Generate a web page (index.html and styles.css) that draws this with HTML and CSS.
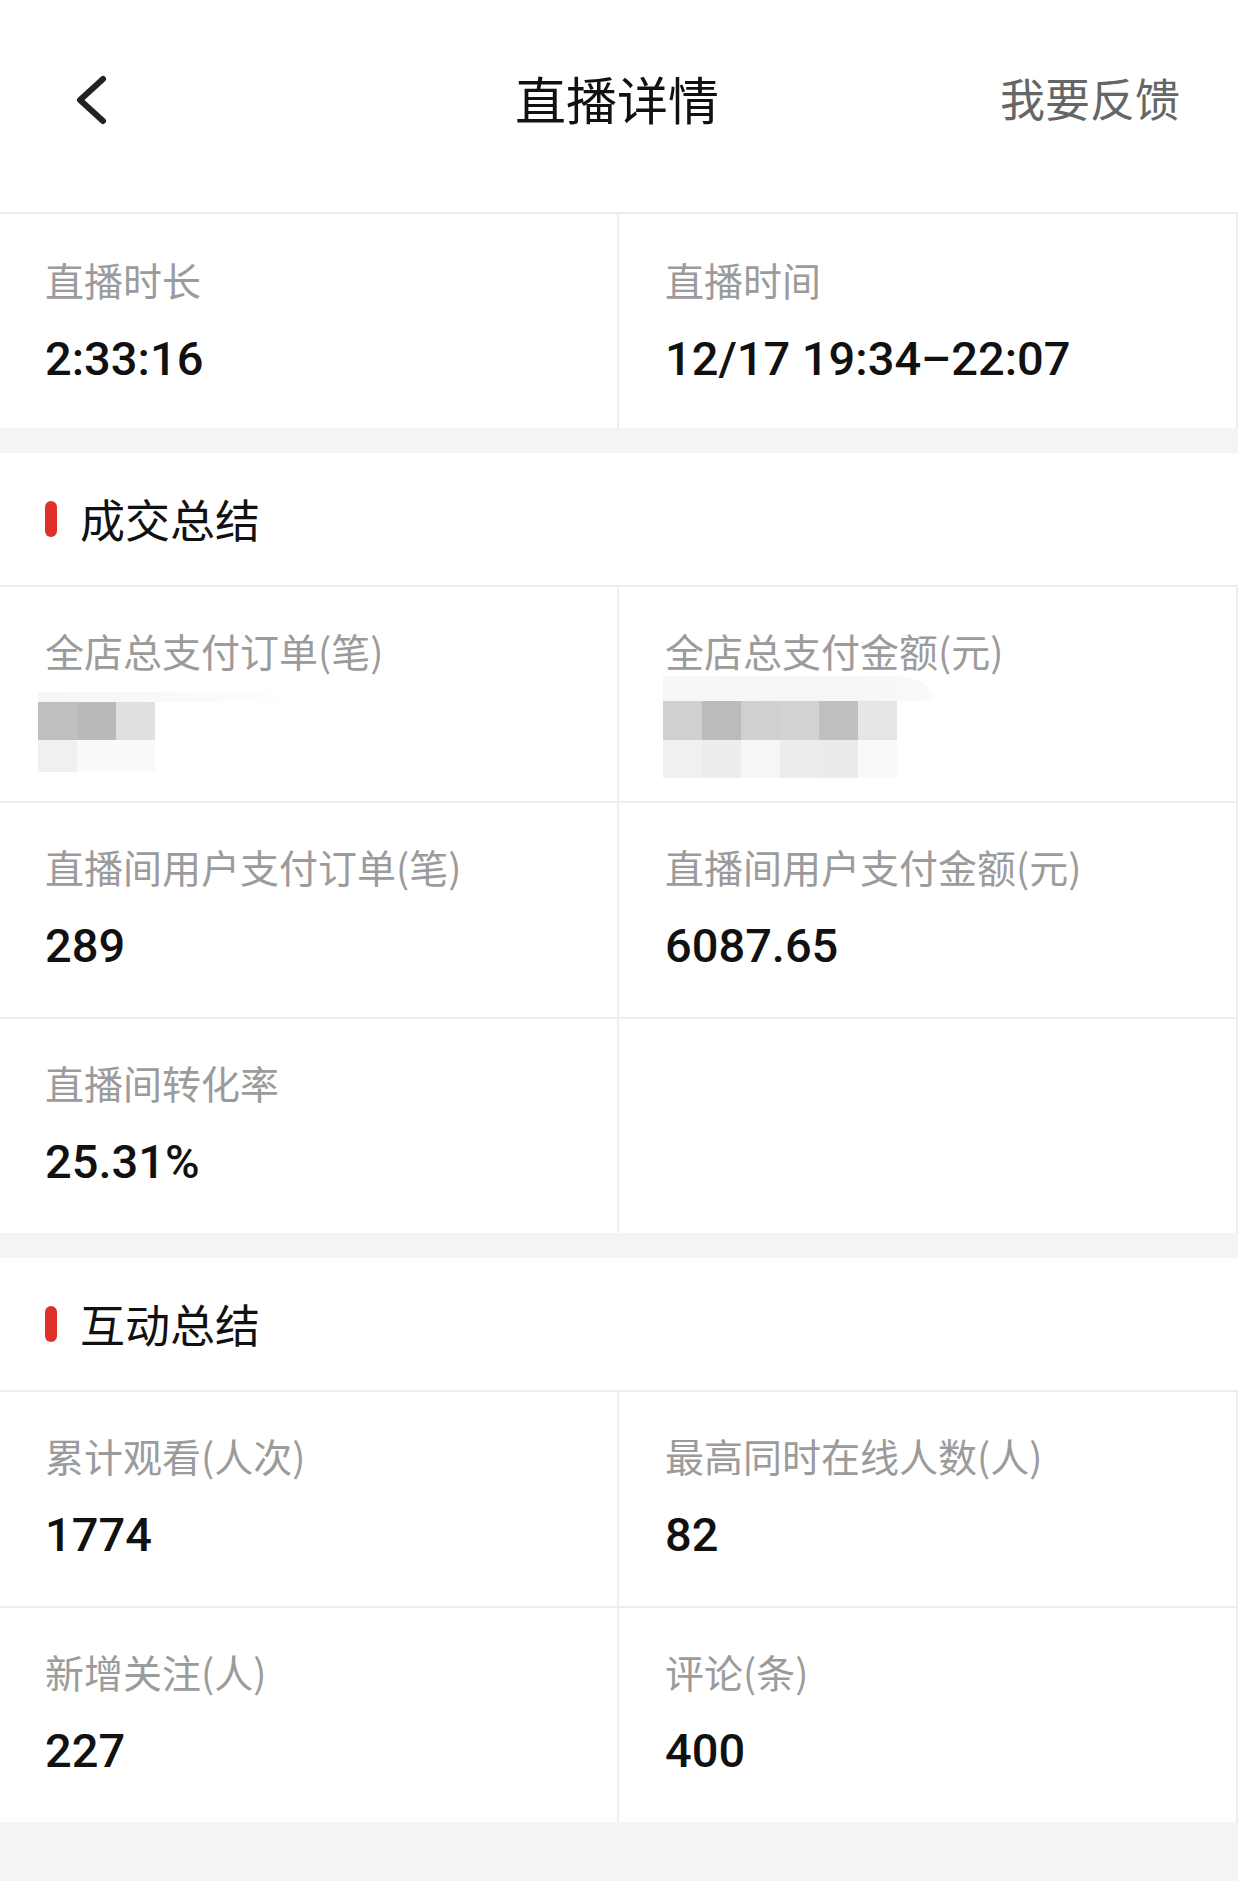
FILE: index.html
```html
<!DOCTYPE html>
<html lang="zh-CN">
<head>
<meta charset="utf-8">
<title>直播详情</title>
<link rel="stylesheet" href="styles.css">
</head>
<body>
<header class="topbar">
  <div class="back">
    <svg class="back-icon" width="40" height="56" viewBox="0 0 40 56"><polyline points="33,7 10,28 33,49" fill="none" stroke="#222" stroke-width="6" stroke-linecap="round" stroke-linejoin="round"/></svg>
  </div>
  <h1 class="title">直播详情</h1>
  <div class="feedback">我要反馈</div>
</header>

<section class="block">
  <div class="grid">
    <div class="cell first"><div class="label">直播时长</div><div class="value">2:33:16</div></div>
    <div class="cell first"><div class="label">直播时间</div><div class="value">12/17 19:34–22:07</div></div>
  </div>
</section>

<section class="block gap">
  <div class="sec-head"><span class="bar"></span><span class="sec-title">成交总结</span></div>
  <div class="grid">
    <div class="cell">
      <div class="label">全店总支付订单(笔)</div>
      <div class="blur">
        <div class="smear smear-left"></div>
        <div class="pix-row"><i class="p1"></i><i class="p2"></i><i class="p3"></i></div>
        <div class="pix-row short"><i class="q1"></i><i class="q2"></i><i class="q2"></i></div>
      </div>
    </div>
    <div class="cell">
      <div class="label">全店总支付金额(元)</div>
      <div class="blur">
        <div class="smear smear-right"></div>
        <div class="pix-row"><i class="r1"></i><i class="r2"></i><i class="r1"></i><i class="r3"></i><i class="r4"></i><i class="r5"></i></div>
        <div class="pix-row tall"><i class="s1"></i><i class="s2"></i><i class="s3"></i><i class="s4"></i><i class="s5"></i><i class="s6"></i></div>
      </div>
    </div>
    <div class="cell"><div class="label">直播间用户支付订单(笔)</div><div class="value">289</div></div>
    <div class="cell"><div class="label">直播间用户支付金额(元)</div><div class="value">6087.65</div></div>
    <div class="cell"><div class="label">直播间转化率</div><div class="value">25.31%</div></div>
    <div class="cell"></div>
  </div>
</section>

<section class="block gap">
  <div class="sec-head"><span class="bar"></span><span class="sec-title">互动总结</span></div>
  <div class="grid">
    <div class="cell"><div class="label">累计观看(人次)</div><div class="value">1774</div></div>
    <div class="cell"><div class="label">最高同时在线人数(人)</div><div class="value">82</div></div>
    <div class="cell"><div class="label">新增关注(人)</div><div class="value">227</div></div>
    <div class="cell"><div class="label">评论(条)</div><div class="value">400</div></div>
  </div>
</section>
</body>
</html>
```

FILE: styles.css
```css
* { box-sizing: border-box; }
html, body { margin: 0; padding: 0; }
body {
  background: #f4f4f4;
  font-family: "Noto Sans CJK SC", "Noto Sans", sans-serif;
  color: #111;
  min-height: 1881px;
}

.topbar {
  height: 214px;
  background: #fff;
  display: grid;
  grid-template-columns: 1fr auto 1fr;
  align-items: center;
  padding: 0 62px 17px 58px;
  border-bottom: 2px solid #ececec;
}
.back { display: flex; align-items: center; padding-left: 12px; padding-top: 4px; }
.back-icon { display: block; }
.title {
  margin: 0;
  font-size: 51px;
  font-weight: 400;
  line-height: 60px;
  color: #111;
}
.feedback {
  justify-self: end;
  font-size: 45px;
  line-height: 60px;
  color: #666;
  margin-right: -4px;
}

.block { background: #fff; }
.block.gap { margin-top: 25px; }

.grid {
  display: grid;
  grid-template-columns: 619px 619px;
}

.cell {
  height: 216px;
  border-top: 2px solid #eeeeee;
  border-right: 2px solid #eeeeee;
  padding: 38px 0 0 45px;
  display: flex;
  flex-direction: column;
}
.cell.first { border-top: none; height: 214px; padding-top: 40px; }
.cell:nth-child(2n) { padding-left: 46px; }

.label {
  font-size: 39px;
  line-height: 50px;
  color: #9b9b9b;
  white-space: nowrap;
}
.value {
  margin-top: 25px;
  font-family: Roboto, "Liberation Sans", sans-serif;
  font-weight: 500;
  font-size: 47px;
  line-height: 60px;
  color: #111;
  white-space: nowrap;
}

.sec-head {
  height: 132px;
  display: flex;
  align-items: center;
  padding-left: 45px;
}
.bar {
  width: 12px;
  height: 36px;
  border-radius: 6px;
  background: #e0302a;
  margin-right: 23px;
}
.sec-title {
  font-size: 45px;
  line-height: 60px;
  color: #111;
}

.blur {
  position: relative;
  margin-top: 26px;
  margin-left: -7px;
}
.cell:nth-child(2n) .blur { margin-left: -2px; }
.smear {
  position: absolute;
  left: 0;
  height: 10px;
  top: -9px;
  background: linear-gradient(90deg, #f6f6f6, #fafafa 60%, rgba(255,255,255,0));
}
.smear-left { width: 260px; }
.smear-right { width: 272px; height: 25px; top: -25px; border-top-right-radius: 40px 25px; background: linear-gradient(90deg, #f7f7f7, #f6f6f6 70%, #fafafa); }
.pix-row { display: flex; }
.pix-row i { display: block; width: 39px; height: 39px; }
.pix-row.short i { height: 32px; }
.pix-row.tall i { height: 38px; }

.p1 { background: #bfbfbf; }
.p2 { background: #bababa; }
.p3 { background: #e0e0e0; }
.q1 { background: #f0f0f0; }
.q2 { background: #fafafa; }

.r1 { background: #d0d0d0; }
.r2 { background: #bbbbbb; }
.r3 { background: #d3d3d3; }
.r4 { background: #c0c0c0; }
.r5 { background: #e6e6e6; }
.s1 { background: #f0f0f0; }
.s2 { background: #ededed; }
.s3 { background: #f6f6f6; }
.s4 { background: #ececec; }
.s5 { background: #ebebeb; }
.s6 { background: #f9f9f9; }
```
